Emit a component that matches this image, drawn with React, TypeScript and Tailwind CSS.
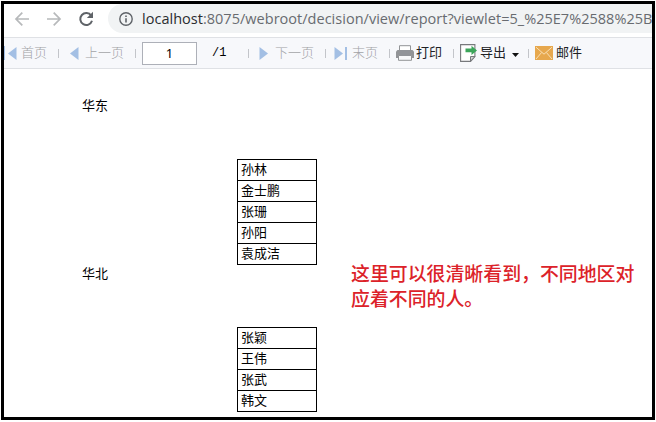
import React from "react";

const groups = [
  { region: "华东", people: ["孙林", "金士鹏", "张珊", "孙阳", "袁成洁"] },
  { region: "华北", people: ["张颖", "王伟", "张武", "韩文"] },
];

function Divider({ className }: { className: string }) {
  return <span className={`h-[9px] w-px shrink-0 bg-[#c3c5ca] ${className}`} />;
}

function Triangle({ left = false, className = "" }: { left?: boolean; className?: string }) {
  return (
    <svg className={`shrink-0 ${className}`} width="9" height="13" viewBox="0 0 9 13">
      <path d={left ? "M8.5 0v13L0 6.5z" : "M0.5 0v13L9 6.5z"} fill="#a3bfe4" />
    </svg>
  );
}

function Label({ children, className }: { children: React.ReactNode; className: string }) {
  return <span className={`shrink-0 whitespace-nowrap ${className}`}>{children}</span>;
}

function AddressBar() {
  return (
    <div className="flex h-[33px] shrink-0 items-start bg-white">
      <svg className="ml-[10px] mt-[7px] shrink-0" width="16" height="16" viewBox="0 0 16 16" fill="none" stroke="#b7b9bb" strokeWidth="1.7">
        <path d="M15 8H2M8.3 1.7L2 8l6.3 6.3" />
      </svg>
      <svg className="ml-[16px] mt-[7px] shrink-0" width="16" height="16" viewBox="0 0 16 16" fill="none" stroke="#b7b9bb" strokeWidth="1.7">
        <path d="M1 8h13M7.7 1.7L14 8l-6.3 6.3" />
      </svg>
      <svg className="ml-[16px] mt-[7px] shrink-0" width="16" height="16" viewBox="0 0 16 16">
        <path d="M13.2 4.6A6 6 0 1 0 14 9.8" fill="none" stroke="#5f6368" strokeWidth="2" />
        <path d="M15 0.8V7H8.8z" fill="#5f6368" />
      </svg>
      <div className="ml-[14px] flex h-[29px] min-w-0 flex-1 items-center overflow-hidden rounded-l-full bg-[#f1f3f4]">
        <svg className="ml-[11px] shrink-0" width="14" height="14" viewBox="0 0 14 14">
          <circle cx="7" cy="7" r="6.2" fill="none" stroke="#5f6368" strokeWidth="1.4" />
          <path d="M7 6.2v4.3M7 3.4v1.6" stroke="#5f6368" strokeWidth="1.6" />
        </svg>
        <span className="ml-[9px] whitespace-nowrap font-['Open_Sans',sans-serif] text-[14.5px] leading-[20px] tracking-[0.02px] text-[#686b70]">
          <span className="text-[#2b2d30]">localhost</span>
          :8075/webroot/decision/view/report?viewlet=5_%25E7%2588%25B5
        </span>
      </div>
    </div>
  );
}

function Toolbar() {
  return (
    <div className="flex h-[32px] shrink-0 items-center border-y border-[#dfe1e5] bg-[#f7f8fb] text-[13px] leading-[20px] text-[#a2a3a6]">
      <span className="h-[14px] w-px shrink-0 bg-[#a3bfe4]" />
      <Triangle left className="ml-[3px]" />
      <Label className="ml-[4px] w-[26px] font-light">首页</Label>
      <Divider className="ml-[11px]" />
      <Triangle left className="ml-[11px]" />
      <Label className="ml-[6px] w-[39px] font-light">上一页</Label>
      <Divider className="ml-[11px]" />
      <div className="ml-[6px] flex h-[23px] w-[55px] shrink-0 items-center justify-center border border-[#adb0b8] bg-white font-['Noto_Sans',sans-serif] text-[13px] text-black">1</div>
      <Label className="ml-[15px] w-[14px] font-['Liberation_Mono',monospace] text-[12px] text-black">/1</Label>
      <Divider className="ml-[22px]" />
      <Triangle className="ml-[10px]" />
      <Label className="ml-[7px] w-[39px] font-light">下一页</Label>
      <Divider className="ml-[11px]" />
      <Triangle className="ml-[8px]" />
      <span className="ml-[2px] h-[13px] w-[2px] shrink-0 bg-[#a3bfe4]" />
      <Label className="ml-[5px] w-[26px] font-light">末页</Label>
      <Divider className="ml-[11px]" />
      <svg className="ml-[6px] shrink-0" width="18" height="16" viewBox="0 0 18 16">
        <path d="M3.5 6V.7h11V6" fill="#fff" stroke="#929497" />
        <path d="M1.5 5h15L18 6.5V13H0V6.5z" fill="#929497" />
        <path d="M2.5 10.5h13v4.8h-13z" fill="#f8f8f8" stroke="#929497" />
      </svg>
      <Label className="ml-[2px] w-[26px] text-[#202124]">打印</Label>
      <Divider className="ml-[11px]" />
      <svg className="ml-[6px] shrink-0" width="18" height="18" viewBox="0 0 18 18">
        <path d="M.6.6h14.3v12l-4.3 4.8H.6z" fill="#fff" stroke="#77797c" strokeWidth="1.1" />
        <path d="M10.5 17v-4.5H15z" fill="#d2d4d6" stroke="#77797c" />
        <path d="M5.5 4.4h6V1.8L17 6.4 11.5 11V8.3h-6z" fill="#3ca55a" />
      </svg>
      <Label className="ml-[2px] w-[26px] text-[#202124]">导出</Label>
      <svg className="ml-[6px] mt-[3px] shrink-0" width="7" height="4" viewBox="0 0 7 4"><path d="M0 0h7L3.5 4z" fill="#111" /></svg>
      <Divider className="ml-[9px]" />
      <svg className="ml-[6px] shrink-0" width="18" height="14" viewBox="0 0 18 14">
        <path d="M0 0h18v14H0z" fill="#e7a84e" />
        <path d="M1 1.2l8 7 8-7M1 13l5.6-6.5M17 13l-5.6-6.5" fill="none" stroke="#f9dfb4" />
      </svg>
      <Label className="ml-[3px] w-[26px] text-[#202124]">邮件</Label>
    </div>
  );
}

export default function App() {
  return (
    <div className="h-[422px] w-[656px] overflow-hidden bg-white pl-px pt-px font-['Liberation_Sans','Noto_Sans_CJK_SC',sans-serif]">
      <div className="relative flex h-[419px] w-[654px] flex-col overflow-hidden border-[3px] border-black bg-white">
        <AddressBar />
        <Toolbar />
        <main className="pt-[27px] text-[13px] leading-[20px] text-black">
          {groups.map((group) => (
            <section key={group.region} className="-mb-px">
              <div className="h-[21px] pl-[78px]">{group.region}</div>
              <div className="ml-[233px] mt-[42px] w-[80px] border border-b-0 border-black">
                {group.people.map((name) => (
                  <div key={name} className="h-[21px] border-b border-black pl-[3px]">{name}</div>
                ))}
              </div>
            </section>
          ))}
        </main>
        <p className="absolute left-[347px] top-[258px] whitespace-nowrap text-[18.9px] font-medium leading-[25px] text-[#dc2229]">
          这里可以很清晰看到，不同地区对<br />应着不同的人。
        </p>
      </div>
    </div>
  );
}
